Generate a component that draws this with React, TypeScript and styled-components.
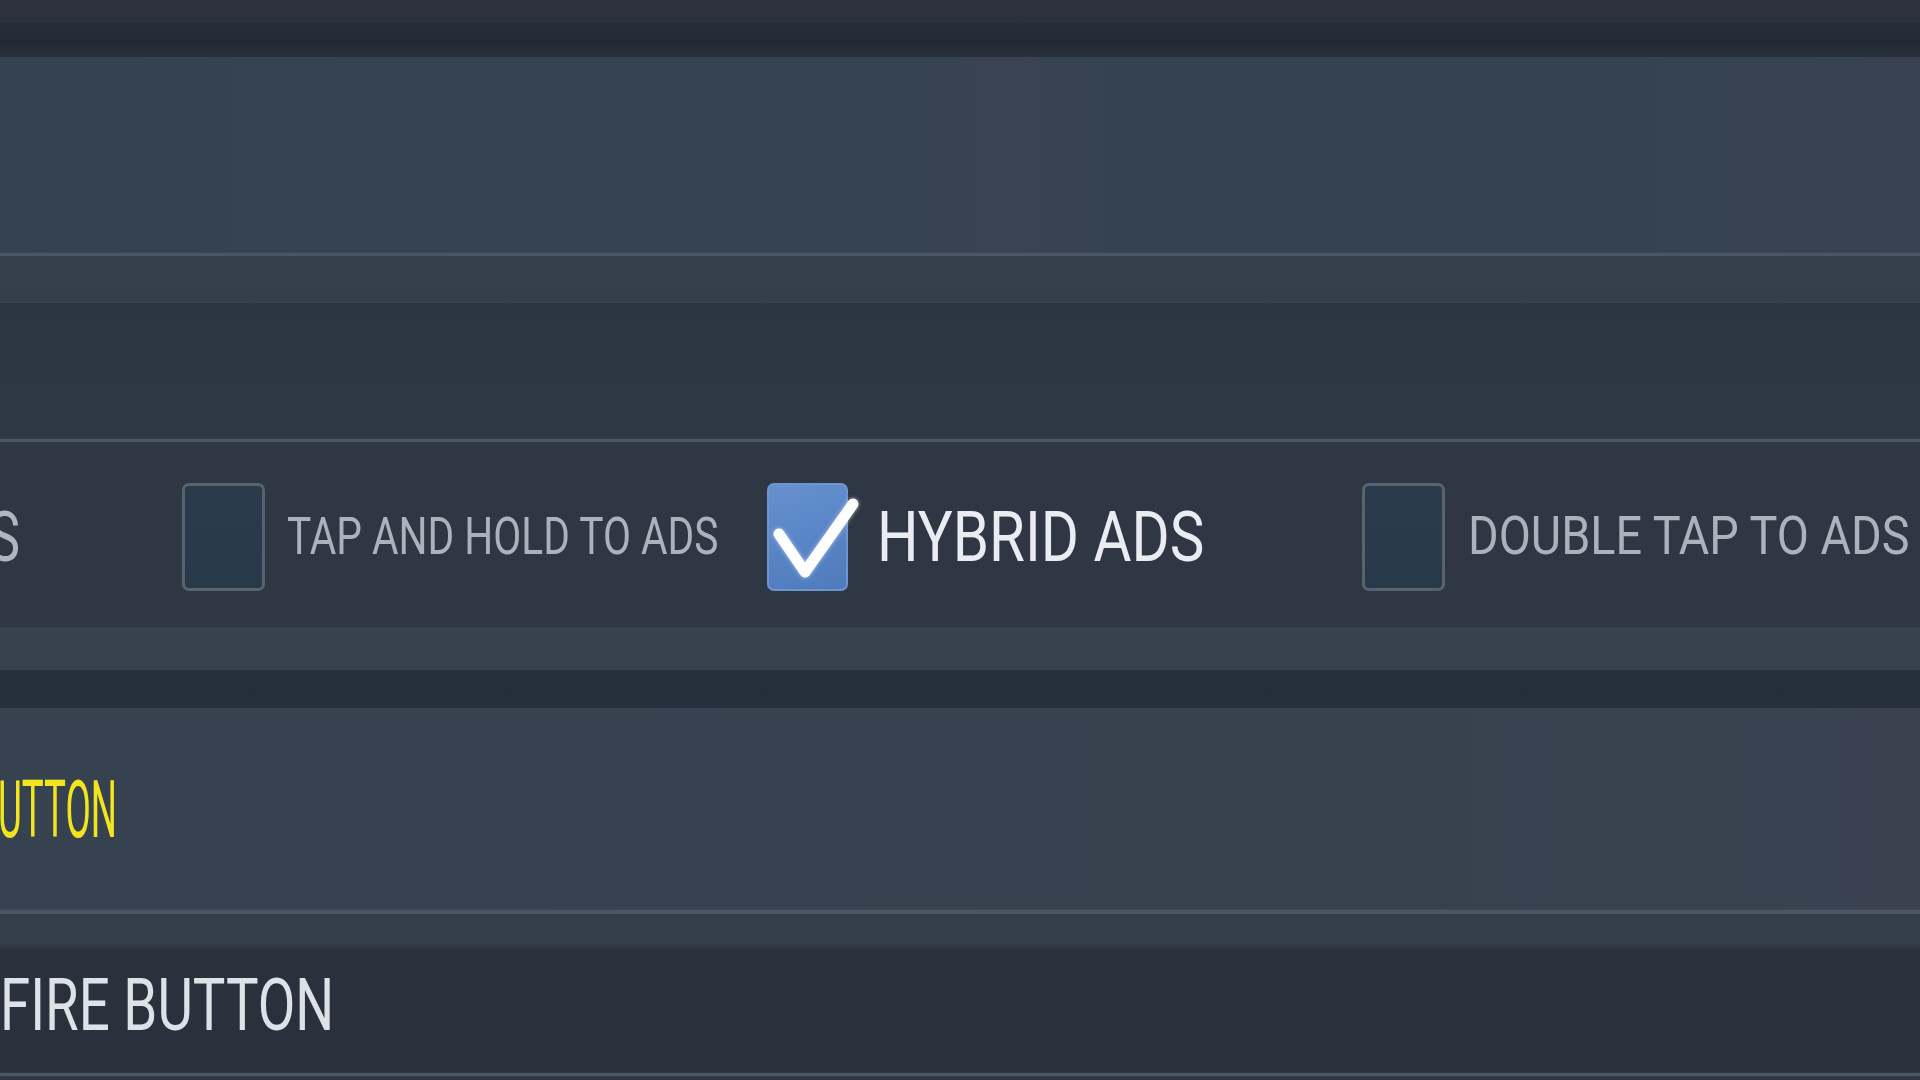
import React, { useLayoutEffect, useRef, useState } from "react";
import styled, { createGlobalStyle } from "styled-components";

const GlobalStyle = createGlobalStyle`
  html, body {
    margin: 0;
    padding: 0;
    background: #2e3642;
  }
  body {
    width: 1920px;
    height: 1080px;
    overflow: hidden;
    font-family: Roboto, "Liberation Sans", Arial, sans-serif;
  }
`;

const Page = styled.div`
  display: flex;
  flex-direction: column;
  width: 1920px;
  height: 1080px;
  overflow: hidden;
  background: #2e3642;
`;

const Band = styled.div<{ $h: number; $bg: string }>`
  height: ${(p) => p.$h}px;
  flex: 0 0 auto;
  background: ${(p) => p.$bg};
`;

const Divider = styled.div<{ $h?: number }>`
  height: ${(p) => p.$h ?? 3}px;
  flex: 0 0 auto;
  background: #4a5664;
  box-shadow: 0 0 2px rgba(90, 104, 120, 0.6);
`;

const Panel = styled.div<{ $h: number; $bg: string }>`
  height: ${(p) => p.$h}px;
  flex: 0 0 auto;
  background: ${(p) => p.$bg};
  display: flex;
  align-items: center;
  overflow: hidden;
`;

const CheckRow = styled.div`
  height: 185px;
  flex: 0 0 auto;
  background: #2f3744;
  display: grid;
  grid-template-columns: 182px 585px 595px 1fr;
  align-items: center;
  padding-top: 4px;
  box-sizing: border-box;
  overflow: hidden;
`;

const LeadClip = styled.div<{ $w: number }>`
  width: ${(p) => p.$w}px;
  overflow: hidden;
  display: flex;
  justify-content: flex-end;
  white-space: nowrap;
`;

const Option = styled.div<{ $gap: number }>`
  display: flex;
  align-items: center;
  gap: ${(p) => p.$gap}px;
`;

const Box = styled.div<{ $checked?: boolean }>`
  position: relative;
  width: ${(p) => (p.$checked ? 81 : 83)}px;
  height: 108px;
  box-sizing: border-box;
  border-radius: 7px;
  flex: 0 0 auto;
  border: ${(p) => (p.$checked ? "2px solid #6f95cf" : "3px solid #58636f")};
  background: ${(p) =>
    p.$checked
      ? "linear-gradient(160deg, #6791cf 0%, #5884c6 55%, #4f7bbd 100%)"
      : "linear-gradient(180deg, #2a3c4b 0%, #283a4a 100%)"};
`;

const Check = styled.svg`
  position: absolute;
  left: -2px;
  top: -2px;
  overflow: visible;
  filter: drop-shadow(0 0 2px rgba(255, 255, 255, 0.55));
`;

const TextBox = styled.span<{ $w: number; $size: number; $color: string }>`
  display: inline-block;
  flex: 0 0 auto;
  width: ${(p) => p.$w}px;
  font-size: ${(p) => p.$size}px;
  color: ${(p) => p.$color};
  line-height: 1;
  white-space: nowrap;
  font-weight: 400;
`;

const TextInner = styled.span`
  display: inline-block;
  transform-origin: left center;
`;

function FitText(props: { w: number; size: number; color: string; children: string }) {
  const ref = useRef<HTMLSpanElement>(null);
  const [scale, setScale] = useState(0.75);
  useLayoutEffect(() => {
    const measure = () => {
      const el = ref.current;
      if (!el) return;
      const natural = el.offsetWidth;
      if (natural > 0) setScale(props.w / natural);
    };
    measure();
    if (document.fonts && document.fonts.ready) {
      document.fonts.ready.then(measure);
    }
  }, [props.w, props.children]);
  return (
    <TextBox $w={props.w} $size={props.size} $color={props.color}>
      <TextInner ref={ref} style={{ transform: `scaleX(${scale})` }}>
        {props.children}
      </TextInner>
    </TextBox>
  );
}

const FocusLabelRow = styled.div`
  display: flex;
  align-items: center;
  padding-top: 2px;
`;

const BottomRow = styled.div`
  height: 159px;
  flex: 0 0 auto;
  display: flex;
  flex-direction: column;
  background: linear-gradient(180deg, #333e4a 0px, #333e4a 30px, #29313d 36px, #29313d 100%);
`;

const BottomLabel = styled.div`
  flex: 1;
  display: flex;
  align-items: center;
  padding-top: 24px;
  overflow: hidden;
`;

export default function App() {
  return (
    <Page>
      <GlobalStyle />
      <Band $h={22} $bg="#2c333f" />
      <Band $h={35} $bg="linear-gradient(180deg,#262e3a 0%,#222a36 60%,#28303c 100%)" />
      <Panel $h={196} $bg="linear-gradient(90deg,#354350 0%,#364350 48%,#3a4352 52%,#354350 58%,#354350 85%,#384251 100%)" />
      <Divider />
      <Band $h={47} $bg="linear-gradient(180deg,#34414d 0%,#33404c 100%)" />
      <Band $h={136} $bg="linear-gradient(180deg,#2c3542 0%,#2e3744 100%)" />
      <Divider />
      <CheckRow>
        <LeadClip $w={20}>
          <FitText w={100} size={70} color="#aeb6bf">
            ADS
          </FitText>
        </LeadClip>
        <Option $gap={22}>
          <Box />
          <FitText w={431} size={52} color="#aab2bc">
            TAP AND HOLD TO ADS
          </FitText>
        </Option>
        <Option $gap={29}>
          <Box $checked>
            <Check width="81" height="108" viewBox="0 0 81 108">
              <polyline
                points="12,51 38,89 86,21"
                fill="none"
                stroke="#ffffff"
                strokeWidth="11"
                strokeLinecap="round"
                strokeLinejoin="round"
              />
            </Check>
          </Box>
          <FitText w={327} size={70} color="#e9edf1">
            HYBRID ADS
          </FitText>
        </Option>
        <Option $gap={23}>
          <Box />
          <FitText w={441} size={53} color="#aab2bc">
            DOUBLE TAP TO ADS
          </FitText>
        </Option>
      </CheckRow>
      <Band $h={43} $bg="#37424f" />
      <Band $h={38} $bg="linear-gradient(180deg,#27313d 0%,#242e3a 60%,#27313d 100%)" />
      <Panel $h={202} $bg="linear-gradient(90deg,#36424f 0%,#36434f 75%,#3a4250 100%)">
        <FocusLabelRow>
          <LeadClip $w={117}>
            <FitText w={142} size={79} color="#f2e41e">
              BUTTON
            </FitText>
          </LeadClip>
        </FocusLabelRow>
      </Panel>
      <Divider $h={4} />
      <BottomRow>
        <BottomLabel>
          <FitText w={334} size={72} color="#dde2e7">
            FIRE BUTTON
          </FitText>
        </BottomLabel>
      </BottomRow>
      <Divider />
    </Page>
  );
}
